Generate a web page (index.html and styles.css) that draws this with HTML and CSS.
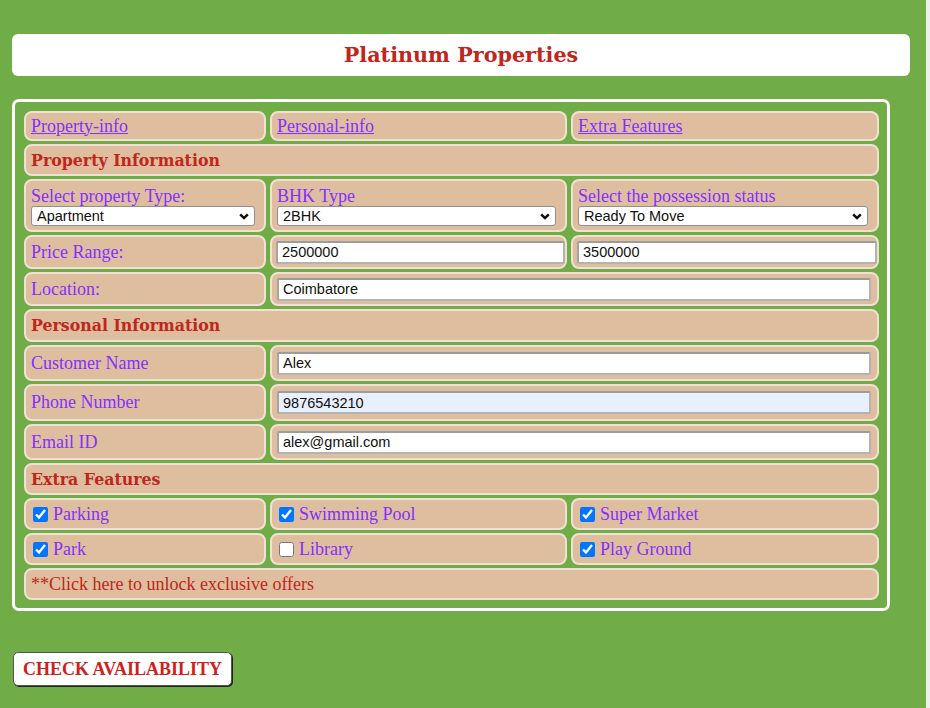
FILE: index.html
```html
<!DOCTYPE html>
<html lang="en">

<head>
  <meta charset="UTF-8">
  <meta name="viewport" content="width=device-width, initial-scale=1.0">

  <title>Platinum Properties</title>
  <link rel="stylesheet" href="styles.css">
</head>

<body>
  <div class="title-bar">
    <h1>Platinum Properties</h1>
  </div>

  <form class="enquiry" onsubmit="return false;">
    <div class="grid">
      <!-- quick links -->
      <div class="cell"><a href="#property">Property-info</a></div>
      <div class="cell"><a href="#personal">Personal-info</a></div>
      <div class="cell"><a href="#extra">Extra Features</a></div>

      <!-- property -->
      <div class="cell heading span-3" id="property">Property Information</div>

      <div class="cell stack">
        <label for="ptype">Select property Type:</label>
        <div class="select-wrap">
          <select id="ptype">
            <option>Apartment</option>
            <option>Villa</option>
            <option>Plot</option>
          </select>
          <svg class="chevron" viewBox="0 0 10 7"><path d="M1.2 1.3 5 5.1 8.8 1.3"/></svg>
        </div>
      </div>
      <div class="cell stack">
        <label for="bhk">BHK Type</label>
        <div class="select-wrap">
          <select id="bhk">
            <option>1BHK</option>
            <option selected>2BHK</option>
            <option>3BHK</option>
          </select>
          <svg class="chevron" viewBox="0 0 10 7"><path d="M1.2 1.3 5 5.1 8.8 1.3"/></svg>
        </div>
      </div>
      <div class="cell stack">
        <label for="status">Select the possession status</label>
        <div class="select-wrap">
          <select id="status">
            <option>Ready To Move</option>
            <option>Under Construction</option>
          </select>
          <svg class="chevron" viewBox="0 0 10 7"><path d="M1.2 1.3 5 5.1 8.8 1.3"/></svg>
        </div>
      </div>

      <div class="cell"><label for="pmin">Price Range:</label></div>
      <div class="cell field"><input type="text" id="pmin" value="2500000"></div>
      <div class="cell field"><input type="text" id="pmax" value="3500000"></div>

      <div class="cell"><label for="loc">Location:</label></div>
      <div class="cell wide span-2"><input type="text" id="loc" value="Coimbatore"></div>

      <!-- personal -->
      <div class="cell heading span-3" id="personal">Personal Information</div>

      <div class="cell"><label for="cname">Customer Name</label></div>
      <div class="cell wide span-2"><input type="text" id="cname" value="Alex"></div>

      <div class="cell"><label for="phone">Phone Number</label></div>
      <div class="cell wide span-2"><input type="text" id="phone" class="autofilled" value="9876543210"></div>

      <div class="cell"><label for="email">Email ID</label></div>
      <div class="cell wide span-2"><input type="text" id="email" value="alex@gmail.com"></div>

      <!-- extras -->
      <div class="cell heading span-3" id="extra">Extra Features</div>

      <div class="cell check"><input type="checkbox" id="f1" checked><label for="f1">Parking</label></div>
      <div class="cell check"><input type="checkbox" id="f2" checked><label for="f2">Swimming Pool</label></div>
      <div class="cell check"><input type="checkbox" id="f3" checked><label for="f3">Super Market</label></div>

      <div class="cell check"><input type="checkbox" id="f4" checked><label for="f4">Park</label></div>
      <div class="cell check"><input type="checkbox" id="f5"><label for="f5">Library</label></div>
      <div class="cell check"><input type="checkbox" id="f6" checked><label for="f6">Play Ground</label></div>

      <div class="cell offer span-3">**Click here to unlock exclusive offers</div>
    </div>
  </form>

  <button class="check-btn" type="button">CHECK AVAILABILITY</button>
</body>

</html>
```

FILE: styles.css
```css
body {
  margin: 0;
  padding: 34px 0 20px 12px;
  font-family: "Liberation Serif", "Times New Roman", serif;
  font-size: 18px;
  background: linear-gradient(to right, #70ad47 926px, #eef0ec 926px);
  min-height: 708px;
  box-sizing: border-box;
}

.title-bar {
  width: 898px;
  height: 42px;
  background-color: white;
  border-radius: 6px;
}

.title-bar h1 {
  margin: 0;
  font-family: "DejaVu Serif", Georgia, serif;
  font-size: 20.7px;
  line-height: 42px;
  text-align: center;
  color: #c0261c;
}

.enquiry {
  width: 878px;
  box-sizing: border-box;
  margin-top: 23px;
  padding: 9px 8px 8px 9px;
  border: 3px solid white;
  border-radius: 7px;
}

.grid {
  display: grid;
  grid-template-columns: 242px 297px 308px;
  grid-template-rows: 30px 32px 53px 34px 34px 33px 36px 37px 36px 32px 32px 32px 32px;
  column-gap: 4px;
  row-gap: 3px;
}

.cell {
  display: flex;
  align-items: center;
  box-sizing: border-box;
  padding: 0 5px;
  background-color: #dfbe9f;
  border: 2px solid #efe2d4;
  border-radius: 8px;
  color: #8430ff;
}

.span-2 {
  grid-column: span 2;
}

.span-3 {
  grid-column: span 3;
}

.cell a {
  color: #8430ff;
}

.heading {
  font-family: "DejaVu Serif", Georgia, serif;
  font-weight: bold;
  font-size: 15.8px;
  color: #c0261c;
}

.offer {
  color: #c0261c;
}

.stack {
  flex-direction: column;
  align-items: stretch;
  justify-content: center;
}

.stack label {
  line-height: 20px;
}

.select-wrap {
  position: relative;
  width: calc(100% - 4px);
}

select {
  display: block;
  width: 100%;
  height: 20px;
  margin: 0;
  padding: 0 20px 0 5px;
  appearance: none;
  font-family: "Liberation Sans", Arial, sans-serif;
  font-size: 14.5px;
  color: #111;
  background-color: white;
  border: 1px solid #8f8f8f;
  border-radius: 3px;
}

.chevron {
  position: absolute;
  right: 6px;
  top: 7px;
  width: 10px;
  height: 7px;
  fill: none;
  stroke: #111;
  stroke-width: 2.5;
  pointer-events: none;
}

input[type="text"] {
  width: 100%;
  height: 23px;
  box-sizing: border-box;
  margin: 0;
  padding: 0 4px;
  font-family: "Liberation Sans", Arial, sans-serif;
  font-size: 14.5px;
  color: #111;
  background-color: white;
  border: 2px solid #b3b3b3;
  border-top-color: #9c9c9c;
  border-left-color: #a4a4a4;
  border-radius: 2px;
}

input.autofilled {
  background-color: #e8f0fe;
}

.field {
  padding: 0 0 0 4px;
}

.wide {
  padding: 0 6px 0 5px;
}

.check {
  padding-left: 7px;
}

.check input {
  width: 15px;
  height: 15px;
  margin: 1px 5px 0 0;
}

.check-btn {
  display: block;
  margin: 41px 0 0 1px;
  width: 219px;
  height: 34px;
  padding: 0;
  font-family: "Liberation Serif", "Times New Roman", serif;
  font-size: 18px;
  font-weight: bold;
  color: #d0201a;
  background-color: white;
  border: 1px solid #555;
  border-radius: 5px;
  box-shadow: 1px 1px 0 #222;
  cursor: pointer;
}
```
